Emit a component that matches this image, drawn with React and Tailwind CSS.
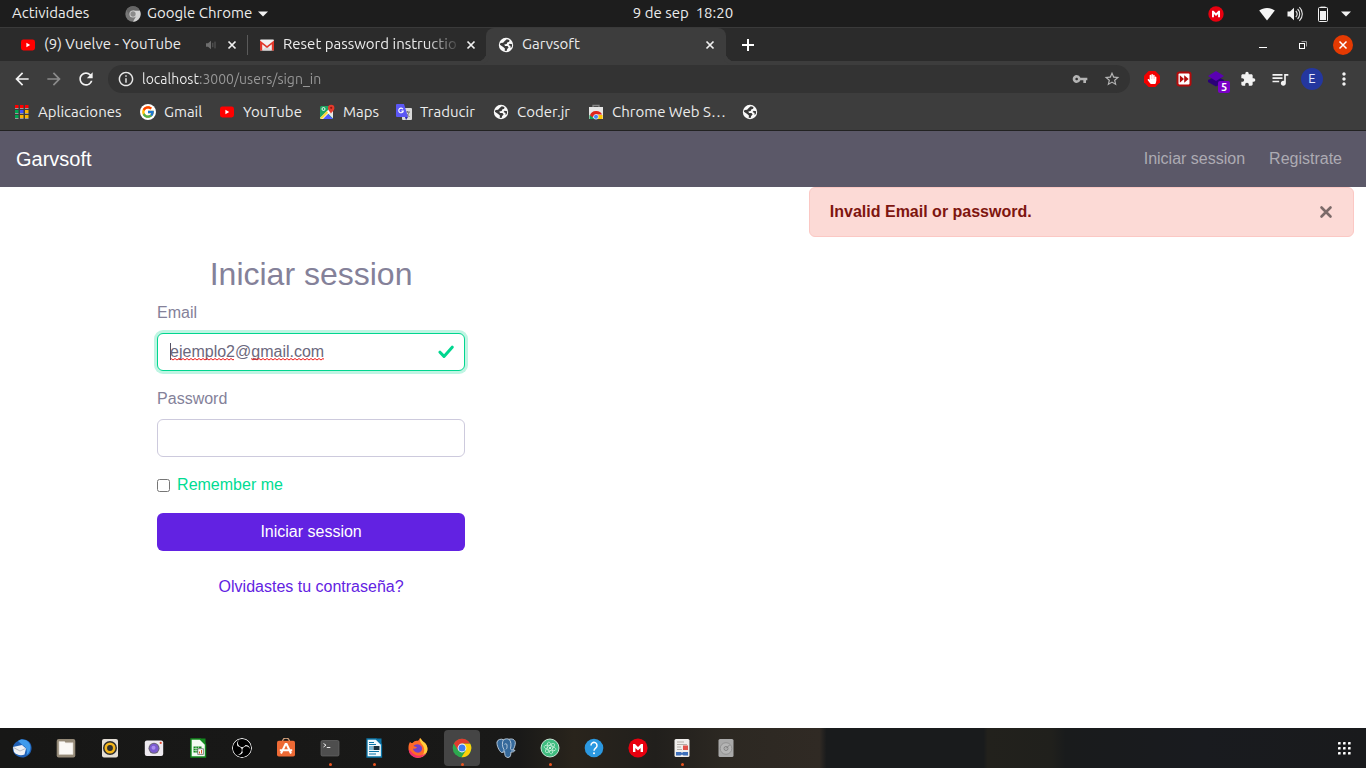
import React from "react";
import { MdVpnKey, MdStarBorder, MdExtension, MdQueueMusic, MdMoreVert, MdArrowBack, MdArrowForward, MdRefresh, MdInfoOutline } from "react-icons/md";
import { FcGoogle } from "react-icons/fc";
import { SiObsstudio } from "react-icons/si";
import { FaHandPaper } from "react-icons/fa";

/* ---------- small shared drawings ---------- */

function YouTubeIcon() {
  return (
    <svg viewBox="0 0 16 16" className="size-4 shrink-0" aria-hidden="true">
      <rect x="1" y="2.5" width="14" height="11" rx="2.4" fill="#f00" />
      <path d="M6.4 5.8v4.4L10.2 8z" fill="#fff" />
    </svg>
  );
}

function GlobeIcon() {
  return (
    <svg viewBox="0 0 16 16" className="size-4 shrink-0" aria-hidden="true">
      <circle cx="8" cy="8" r="7.2" fill="#fafafa" />
      <path d="M8.800 2.200l2.600.9-.2 1.700-2 .8-.5 1.500-2.400.5.7 1.300 2.500.1 1.100 1.600-1.400 1.500-.6 1.900-1.900-.2.2-2.200-1.700-1.600L1.900 7.700l.6-1.700 2.600-.2 1.600-1.700z" fill="#3a3a3a" />
      <path d="M14.200 7.200l-2.600-.5-1 1.300 1.900.9.100 2.200 1.200-1.200z" fill="#3a3a3a" />
    </svg>
  );
}

function CloseIcon() {
  return (
    <svg viewBox="0 0 10 10" className="size-2.5" aria-hidden="true">
      <path d="M1.500 1.500l7 7M8.500 1.500l-7 7" stroke="#f0f0f0" strokeWidth="1.700" />
    </svg>
  );
}

function CaretDown() {
  return (
    <svg viewBox="0 0 10 6" className="h-1.5 w-2.5" aria-hidden="true">
      <path d="M0 .5h10L5 5.500z" fill="#f2f2f2" />
    </svg>
  );
}

function MegaIcon({ className }) {
  return (
    <svg viewBox="0 0 20 20" className={className} aria-hidden="true">
      <circle cx="10" cy="10" r="9.600" fill="#e8000f" />
      <path d="M5 14V6h2L10 9l3-3h2v8h-2.400v-4L10 12.600 7.400 10v4z" fill="#fff" />
    </svg>
  );
}

/* ---------- desktop top bar ---------- */

function TopBar() {
  return (
    <header className="grid h-7 grid-cols-[1fr_auto_1fr] items-center border-b border-[#3a3a3a] bg-[#1d1d1d] text-[15px] text-[#ececec]">
      <div className="flex items-center">
        <button className="ml-3 w-[113px] text-left">Actividades</button>
        <button className="flex items-center gap-1.5">
          <svg viewBox="0 0 16 16" className="size-4" aria-hidden="true">
            <circle cx="8" cy="8" r="7.700" fill="#777" />
            <path d="M8 4.500h6.800A7.700 7.700 0 0 1 8 15.700l3.200-5.800z" fill="#d2d2d2" />
            <path d="M1.300 4.200A7.700 7.700 0 0 1 14.800 4.500H8L4.800 9.700z" fill="#666" />
            <circle cx="8" cy="8" r="3.600" fill="#d8d8d8" />
            <circle cx="8" cy="8" r="2.700" fill="#8b8b8b" />
          </svg>
          <span className="whitespace-nowrap">Google Chrome</span>
          <CaretDown />
        </button>
      </div>
      <button className="whitespace-pre">9 de sep  18:20</button>
      <div className="flex items-center justify-end pr-[15px]">
        <MegaIcon className="mr-[35px] size-4" />
        <button className="flex items-center gap-2.5" aria-label="Sistema">
          <span className="flex gap-3">
            <svg viewBox="0 0 16 16" className="size-4" aria-hidden="true">
              <path d="M8 14.500L.2 4.600C4.700 1 11.300 1 15.800 4.600z" fill="#f5f5f5" />
            </svg>
            <svg viewBox="0 0 16 16" className="size-4" aria-hidden="true">
              <path d="M.5 5.500H3L7 1.800v12.400L3 10.500H.5z" fill="#f2f2f2" />
              <path d="M8.800 5c1.600 1.700 1.600 4.300 0 6M10.600 3c2.800 2.800 2.800 7.200 0 10M12.400 1.200c3.900 3.900 3.900 9.700 0 13.600" fill="none" stroke="#e4e4e4" strokeWidth="1.100" />
            </svg>
            <svg viewBox="0 0 16 16" className="size-4" aria-hidden="true">
              <path d="M5.500 2V.6h5V2" fill="#f2f2f2" />
              <rect x="3.500" y="1.500" width="9" height="14" rx="1" fill="none" stroke="#f2f2f2" />
              <rect x="5" y="5" width="6" height="9" fill="#f2f2f2" />
            </svg>
          </span>
          <CaretDown />
        </button>
      </div>
    </header>
  );
}

/* ---------- browser chrome ---------- */

function TabStrip() {
  return (
    <div className="flex h-[33px] items-stretch bg-[#2b2b2b] pl-2 text-[15px] text-[#ececec]">
      <div className="flex w-[239px] items-center gap-2 pl-3 pr-2.5">
        <YouTubeIcon />
        <span className="flex-1 whitespace-nowrap">(9) Vuelve - YouTube</span>
        <svg viewBox="0 0 12 12" className="mr-0.5 size-3" aria-hidden="true">
          <path d="M1 4.200h2L6 1.800v8.400L3 7.800H1z" fill="#6e6e6e" />
          <path d="M7.800 3.800v4.400M10 2.600v6.800" stroke="#5c5c5c" strokeWidth="1" />
        </svg>
        <button aria-label="Cerrar (9) Vuelve - YouTube"><CloseIcon /></button>
      </div>
      <div className="flex w-[239px] items-center">
        <span className="h-5 w-px bg-[#5a5a5a]" />
        <div className="flex flex-1 items-center gap-2 pl-[11px] pr-2.5">
          <svg viewBox="0 0 16 16" className="size-4 shrink-0" aria-hidden="true">
            <rect x="1" y="2.500" width="14" height="11" rx="1" fill="#f1f1f1" />
            <path d="M3.200 13.500L8 8.600l4.800 4.900z" fill="#dcdcdc" />
            <path d="M1 13.500V3.400L8 9l7-5.600v10.100h-2.200V7.200L8 11 3.200 7.200v6.300z" fill="#e1382b" />
          </svg>
          <span className="flex-1 overflow-hidden whitespace-nowrap [mask-image:linear-gradient(90deg,#000_82%,transparent_102%)]">Reset password instructio</span>
          <button aria-label="Cerrar Reset password instructions"><CloseIcon /></button>
        </div>
      </div>
      <div className="relative flex w-60 items-center gap-2 rounded-t-lg bg-[#3d3d3d] pl-3 pr-[11px] before:absolute before:bottom-0 before:-left-2 before:size-2 before:rounded-br-lg before:shadow-[3px_3px_0_#3d3d3d] after:absolute after:-right-2 after:bottom-0 after:size-2 after:rounded-bl-lg after:shadow-[-3px_3px_0_#3d3d3d]">
        <GlobeIcon />
        <span className="flex-1">Garvsoft</span>
        <button aria-label="Cerrar Garvsoft"><CloseIcon /></button>
      </div>
      <button className="flex w-11 items-center justify-center" aria-label="Nueva pestaña">
        <svg viewBox="0 0 12 12" className="size-3" aria-hidden="true"><path d="M6 0v12M0 6h12" stroke="#fff" strokeWidth="2" /></svg>
      </button>
      <div className="ml-auto flex items-center pr-[3px]">
        <button className="flex h-full w-10 items-center justify-center" aria-label="Minimizar">
          <svg viewBox="0 0 10 10" className="size-2.5" aria-hidden="true"><path d="M1 7.500h8" stroke="#fff" /></svg>
        </button>
        <button className="flex h-full w-10 items-center justify-center" aria-label="Restaurar">
          <svg viewBox="0 0 10 10" className="size-2.5" aria-hidden="true">
            <path d="M3.500 1.500h5v5" fill="none" stroke="#9a9a9a" />
            <rect x="1.500" y="3.500" width="5" height="5" fill="none" stroke="#fff" />
          </svg>
        </button>
        <button className="flex h-full w-10 items-center justify-center" aria-label="Cerrar ventana">
          <svg viewBox="0 0 20 20" className="size-5" aria-hidden="true">
            <circle cx="10" cy="10" r="10" fill="#e53a02" />
            <path d="M6.500 6.500l7 7M13.500 6.500l-7 7" stroke="#fff" strokeWidth="1.500" />
          </svg>
        </button>
      </div>
    </div>
  );
}

function ToolButton({ label, children }) {
  return <button aria-label={label} className="flex size-8 items-center justify-center text-[#f2f2f2]">{children}</button>;
}

function Toolbar() {
  return (
    <div className="flex h-9 items-center gap-1.5 bg-[#3d3d3d] px-1.5">
      <div className="flex">
        <ToolButton label="Atrás"><MdArrowBack className="size-5" /></ToolButton>
        <ToolButton label="Adelante"><MdArrowForward className="size-5 text-[#8b8b8b]" /></ToolButton>
        <ToolButton label="Recargar"><MdRefresh className="size-5" /></ToolButton>
      </div>
      <div className="flex h-7 flex-1 items-center gap-2 rounded-full bg-[#333] px-2.5">
        <MdInfoOutline className="size-4 scale-110 text-[#e8e8e8]" aria-hidden="true" />
        <input
          aria-label="Dirección"
          defaultValue="localhost:3000/users/sign_in"
          className="flex-1 bg-[linear-gradient(90deg,#f2f2f2_58px,#9b9b9b_58px)] bg-clip-text text-sm text-transparent outline-none"
        />
        <div className="flex gap-4 text-[#b4b4b4]">
          <button aria-label="Contraseñas"><MdVpnKey className="size-4" /></button>
          <button aria-label="Favorito"><MdStarBorder className="size-4 scale-110" /></button>
        </div>
      </div>
      <div className="flex">
        <ToolButton label="Bloqueador">
          <span className="relative flex size-4 items-center justify-center">
            <svg viewBox="0 0 16 16" className="absolute size-4" aria-hidden="true"><path d="M4.700 0h6.600L16 4.700v6.600L11.300 16H4.700L0 11.300V4.700z" fill="#f20000" /></svg>
            <FaHandPaper className="relative size-2.5 text-white" />
          </span>
        </ToolButton>
        <ToolButton label="Velocidad">
          <svg viewBox="0 0 16 16" className="size-4" aria-hidden="true">
            <rect x=".5" y=".5" width="15" height="15" rx="3" fill="#b30b0b" />
            <rect x="2.500" y="2.500" width="11" height="11" rx="1" fill="#fff" />
            <path d="M3.800 4.200L8 8l-4.200 3.800zM8.200 4.200L12.600 8l-4.400 3.800z" fill="#b30b0b" />
          </svg>
        </ToolButton>
        <ToolButton label="Capas">
          <span className="relative block size-4">
            <svg viewBox="0 0 16 16" className="size-4" aria-hidden="true">
              <path d="M0 9l8-4 8 4v2l-8 4.500L0 11z" fill="#2b0078" />
              <path d="M8 0l8 5-8 5-8-5z" fill="#5a00b4" />
            </svg>
            <span className="absolute top-2.5 left-2.5 flex h-3 w-3 items-center justify-center rounded-xs bg-[#7a00c8] text-[11px] font-bold text-white">5</span>
          </span>
        </ToolButton>
        <ToolButton label="Extensiones"><MdExtension className="size-4" /></ToolButton>
        <ToolButton label="Medios"><MdQueueMusic className="size-5" /></ToolButton>
        <ToolButton label="Perfil">
          <span className="flex size-[22px] items-center justify-center rounded-full bg-[#24379f] text-[13px] text-[#e6e9ff]">E</span>
        </ToolButton>
        <ToolButton label="Menú"><MdMoreVert className="size-5" /></ToolButton>
      </div>
    </div>
  );
}

function AppsIcon() {
  const colors = ["#f00", "#f00", "#f00", "#00a651", "#3f51ff", "#fbb500", "#00a651", "#fbb500", "#fbb500"];
  return (
    <svg viewBox="0 0 16 16" className="size-4" aria-hidden="true">
      {colors.map((c, i) => (
        <g key={i}>
          <rect x={1 + (i % 3) * 5} y={1 + Math.floor(i / 3) * 5} width="3.500" height="3" fill={c} />
          <rect x={1 + (i % 3) * 5} y={4 + Math.floor(i / 3) * 5} width="3.500" height="1" fill="#999" />
        </g>
      ))}
    </svg>
  );
}

function MapsIcon() {
  return (
    <svg viewBox="0 0 16 16" className="size-4" aria-hidden="true">
      <rect x="1" y="2" width="13" height="13" rx="1.500" fill="#1fa463" />
      <path d="M14 4v10.500L8 8.500z" fill="#e8e8e8" />
      <path d="M2 15l6-6 6 6z" fill="#4f5bff" />
      <path d="M1 14L12 3l2 2L4 15H2z" fill="#fff" />
      <path d="M1 14l2 1L9 9 8 7z" fill="#fdd835" />
      <circle cx="4.500" cy="5" r="1.500" fill="none" stroke="#fff" strokeWidth=".9" />
      <path d="M12 10c0-2-3-3-3-6a3 3 0 0 1 6.400 0c0 3-3.400 4-3.400 6z" fill="#e53a2b" />
      <circle cx="12.200" cy="3.800" r="1.100" fill="#8c1a12" />
    </svg>
  );
}

function TranslateIcon() {
  return (
    <svg viewBox="0 0 16 16" className="size-4" aria-hidden="true">
      <rect x="6" y="4" width="10" height="12" rx="1" fill="#d9d9d9" />
      <path d="M9 8h5M11.500 7v1.500M13 8c-.5 2.500-2 4-3.500 5M10.500 10l3 3" stroke="#7a7a7a" fill="none" />
      <path d="M1 0h7l4 13H1a1 1 0 0 1-1-1V1a1 1 0 0 1 1-1z" fill="#5b57f5" />
      <path d="M9 13h3l-2 3z" fill="#2d2aa8" />
      <path d="M7 5.200A2.300 2.300 0 1 0 7.300 7H5.300" fill="none" stroke="#fff" strokeWidth="1.100" />
    </svg>
  );
}

function StoreIcon() {
  return (
    <svg viewBox="0 0 16 16" className="size-4" aria-hidden="true">
      <path d="M5 3V1.500h6V3" fill="none" stroke="#888" strokeWidth="1.300" />
      <rect x="1" y="3" width="14" height="12" fill="#e6e6e6" />
      <path d="M2 15V12a6 5 0 0 1 6-5 6 5 0 0 1 6 3.500H8z" fill="#e0241b" />
      <path d="M1.500 11v4H7z" fill="#0f9d58" />
      <path d="M9 11h5.500v4H8z" fill="#fbc400" />
      <circle cx="8" cy="12.800" r="2.400" fill="#4285f4" stroke="#fff" strokeWidth=".6" />
    </svg>
  );
}

function Bookmarks() {
  const items = [
    { label: "Aplicaciones", icon: <AppsIcon />, width: "w-[110px]" },
    { label: "Gmail", icon: <span className="flex size-4 items-center justify-center rounded-full bg-white"><FcGoogle className="size-3.5" /></span>, width: "w-[63px]" },
    { label: "YouTube", icon: <YouTubeIcon />, width: "w-[84px]" },
    { label: "Maps", icon: <MapsIcon />, width: "w-[61px]" },
    { label: "Traducir", icon: <TranslateIcon />, width: "w-[81px]" },
    { label: "Coder.jr", icon: <GlobeIcon />, width: "w-[79px]" },
    { label: "Chrome Web S…", icon: <StoreIcon />, width: "w-[138px]" },
  ];
  return (
    <nav aria-label="Marcadores" className="flex h-[34px] items-center gap-4 border-b border-[#222] bg-[#3d3d3d] px-3.5 pb-[3px] text-[15px] text-[#ececec]">
      {items.map((b) => (
        <a key={b.label} href="#" className={"flex items-center gap-2 whitespace-nowrap " + b.width}>
          <span className="shrink-0">{b.icon}</span>
          {b.label}
        </a>
      ))}
      <a href="#" aria-label="Marcador"><GlobeIcon /></a>
    </nav>
  );
}

/* ---------- web page ---------- */

function Page() {
  return (
    <div className="flex flex-1 flex-col bg-white font-['Liberation_Sans',Arial,sans-serif] text-base text-[#848199]">
      <nav className="flex h-14 items-center justify-between bg-[#5b5868] pr-6 pl-4">
        <a href="#" className="text-xl text-white">Garvsoft</a>
        <div className="flex gap-6 text-[#adabb3]">
          <a href="#">Iniciar session</a>
          <a href="#">Registrate</a>
        </div>
      </nav>
      <div role="alert" className="mr-3 ml-auto flex w-[calc(100%*5/12-24px)] items-center justify-between rounded-md border border-[#fbc8c4] bg-[#fcdad6] px-5 py-3 text-[#7e150f]">
        <strong className="font-bold">Invalid Email or password.</strong>
        <button aria-label="Cerrar aviso">
          <svg viewBox="0 0 14 14" className="size-3.5" aria-hidden="true"><path d="M2.500 2.500l9 9M11.500 2.500l-9 9" stroke="#7b6a69" strokeWidth="2.600" strokeLinecap="round" /></svg>
        </button>
      </div>
      <main className="ml-[11.5%] w-77 pt-[18px] pb-8">
        <h1 className="mb-2 text-center text-[32px] leading-[38px]">Iniciar session</h1>
        <form onSubmit={(e) => e.preventDefault()}>
          <label htmlFor="email" className="mb-2 block">Email</label>
          <div className="relative mb-4">
            <input
              id="email"
              type="text"
              spellCheck={false}
              defaultValue="ejemplo2@gmail.com"
              className="block h-[38px] w-full rounded-md border border-[#00d68f] bg-white px-3 text-[#6b687d] shadow-[0_0_0_3px_#bff5e3] outline-none"
            />
            <svg className="pointer-events-none absolute top-2.5 left-3 h-5 w-40" viewBox="0 0 160 20" aria-hidden="true">
              <defs>
                <pattern id="wave" width="4" height="3" patternUnits="userSpaceOnUse" y="15">
                  <path d="M0 2L2 .5l2 1.500" fill="none" stroke="#f01818" strokeWidth="1" />
                </pattern>
              </defs>
              <rect x="1" y="15" width="64" height="3" fill="url(#wave)" />
              <rect x="82" y="15" width="73" height="3" fill="url(#wave)" />
              <path d="M1.500 0v17" stroke="#555266" />
            </svg>
            <svg className="pointer-events-none absolute top-[11px] right-[11px] size-4" viewBox="0 0 16 16" aria-hidden="true">
              <path d="M2 8.200l4 4.200L14.200 3.200" fill="none" stroke="#00d68f" strokeWidth="3" strokeLinecap="round" strokeLinejoin="round" />
            </svg>
          </div>
          <label htmlFor="password" className="mb-2 block">Password</label>
          <input id="password" type="password" className="mb-4 block h-[38px] w-full rounded-md border border-[#cdcadd] bg-white px-3 outline-none" />
          <div className="mb-4 flex h-6 items-center gap-[7px]">
            <input id="remember" type="checkbox" className="size-[13px]" />
            <label htmlFor="remember" className="text-[#00dc93]">Remember me</label>
          </div>
          <button type="submit" className="mb-6 block h-[38px] w-full rounded-md bg-[#6222e2] text-white">Iniciar session</button>
        </form>
        <p className="text-center"><a href="#" className="text-[#6222e2]">Olvidastes tu contraseña?</a></p>
      </main>
    </div>
  );
}

/* ---------- dock ---------- */

const dockApps = [
  { name: "Thunderbird", art: (
    <>
      <path d="M6 3C9-.5 19.500 1 19.600 10c0 5-3.500 8.500-8 9.400C6 20 1 16 .8 11 .5 8 3 4 6 3z" fill="#1f5fb4" />
      <path d="M6 3C10-.5 18 2 18.500 9c0 4-2 7-4 8 1-5 0-8-4-10z" fill="#3f9bec" />
      <path d="M1 9L10 7l4 3.500-1.500 6C9 18 4 17 2 14z" fill="#f0f2f5" />
      <path d="M1.500 9.500L8 13l5.500-2.500" fill="none" stroke="#b6bcc6" />
    </>
  ) },
  { name: "Archivos", art: (
    <>
      <rect x=".7" y=".9" width="18.600" height="18.600" rx="2" fill="#958a78" />
      <path d="M3 3.500h5.500l1 1.200h7.500v11.800H3z" fill="#faf8f5" stroke="#d6d0c6" strokeWidth=".6" />
    </>
  ) },
  { name: "Rhythmbox", art: (
    <>
      <rect x="2" y="1" width="16" height="18.500" rx="2" fill="#e4ded5" />
      <circle cx="10" cy="10" r="7" fill="#2c2c2c" />
      <circle cx="10" cy="10" r="4.200" fill="none" stroke="#f3b51c" strokeWidth="2.600" />
      <circle cx="10" cy="10" r="2" fill="#333" />
    </>
  ) },
  { name: "Cheese", art: (
    <>
      <rect x=".8" y="2.500" width="18.400" height="15.500" rx="2" fill="#eeeaf0" />
      <circle cx="10" cy="10.300" r="5.500" fill="#6a6474" />
      <circle cx="10" cy="10.300" r="4.500" fill="#7b5bd0" />
      <circle cx="9.500" cy="9.800" r="2" fill="#a98cf0" />
      <circle cx="16.700" cy="4.900" r="1.100" fill="#e84a2f" />
    </>
  ) },
  { name: "LibreOffice Calc", art: (
    <>
      <path d="M3 1h9l5.500 5.500V19H3z" fill="#f2fbf2" stroke="#138a1e" strokeWidth="1.400" />
      <path d="M11.500 .5h6v6z" fill="#138a1e" />
      <rect x="5.500" y="8.500" width="8" height="6" fill="#138a1e" />
      <path d="M5.500 10.500h8M5.500 12.500h8M8 8.500v6M10.500 8.500v6" stroke="#e0f5e0" strokeWidth=".6" />
      <rect x="9.800" y="10.800" width="5.500" height="5.500" fill="#fff" stroke="#666" strokeWidth=".8" />
      <path d="M11.500 15.500v-2M13.500 15.500v-3.500" stroke="#d35a1e" />
    </>
  ) },
  { name: "OBS", icon: <SiObsstudio className="size-5 rounded-full bg-black text-white" /> },
  { name: "Software", art: (
    <>
      <path d="M6.500 4a3.500 4 0 0 1 7 0" fill="none" stroke="#d6a27c" strokeWidth="1.400" />
      <rect x="1" y="2.800" width="18" height="15.700" rx="1.800" fill="#ee6a35" />
      <path d="M5 15.500L9.600 6h1l4.400 9.500M3.800 12.300h12.400" fill="none" stroke="#fff" strokeWidth="2" />
    </>
  ) },
  { name: "Terminal", running: true, art: (
    <>
      <rect x="1" y="2.500" width="18" height="15.500" rx="1.500" fill="#4e4e4e" stroke="#686868" strokeWidth=".7" />
      <path d="M3.500 5.500L6 7.200 3.500 9M6.800 9.500h3.500" fill="none" stroke="#e8e8e8" strokeWidth="1" />
    </>
  ) },
  { name: "LibreOffice Writer", running: true, art: (
    <>
      <path d="M3 1h9l5.500 5.500V19H3z" fill="#f1f9fd" stroke="#0b75a8" strokeWidth="1.300" />
      <path d="M11.500 .5h6v6z" fill="#0b75a8" />
      <path d="M5 4.500h5M5 6.500h7M5 9h4M5 11h4M5 13.500h10M5 16h7" stroke="#0b75a8" strokeWidth="1.100" />
      <rect x="9.500" y="8" width="6" height="4" fill="#19303e" />
    </>
  ) },
  { name: "Firefox", art: (
    <>
      <path d="M2 4c1 1 1.500 1 2.500 1C6 3.500 7 3 8.500 2.800 10 3 10.500 3 12 0c2 2 3 4 5 5 2 2 3 5 2.200 8A9.500 9.500 0 0 1 .6 11.500C.2 8.500.8 6 2 4z" fill="#ff6a28" />
      <path d="M12 0c2 2 3 4 5 5 2 2 3 5 2.200 8-1 3-3 5-6 6 3-3 4-7 2-11-1-2-4-4-3.200-8z" fill="#ffcf3a" />
      <path d="M.6 11.500C1 17 6 20 10 19.700c4-.2 7-2 8-5-3 3-8 4-11 2-3-1.500-4-4-6.400-5.200z" fill="#f2306f" />
      <path d="M5.500 8c1.500-2 5.500-3 8 .5 1.500 2.500 0 6-3.500 6.200C7 14.500 5 12.500 5 10.500c2 .5 3.500 0 4-1.200C8 9 7 8.500 5.500 8z" fill="#7341c9" />
    </>
  ) },
  { name: "Google Chrome", running: true, active: true, art: (
    <>
      <circle cx="10" cy="10" r="9.300" fill="#2da94f" />
      <path d="M10 5.500h8.100A9.300 9.300 0 0 1 9.500 19.300L14 12.200z" fill="#fdd10a" />
      <path d="M1.900 5.400A9.300 9.300 0 0 1 18.100 5.500H10L6 12.300z" fill="#df3b2f" />
      <circle cx="10" cy="10" r="4.400" fill="#fff" />
      <circle cx="10" cy="10" r="3.500" fill="#3d7def" />
    </>
  ) },
  { name: "PostgreSQL", art: (
    <>
      <path d="M1 4c.5-2.500 4-3.500 6.500-2.300C9.500.6 11.500.6 13 1.300c3-1 6 .2 6.300 3 .2 2.700-1 5.400-2.300 7.700l2 .3c-.5 1.500-2.500 2-4 1.700-.2 2.500-.2 5.500-3 5.500s-3.500-2.500-3.300-6c-.8.7-2 1-3.200 1C3 13 .5 7 1 4z" fill="#35699b" stroke="#c4d4e2" strokeWidth=".9" />
      <path d="M7.500 1.700C6 4 6 8.500 7.800 11.200c.7 1 .2 2-1 2.300M13 1.300c2.300 2 2.300 6 1.500 9.200.2 1.500 1 1.500 2.500 1.500M8.500 6.300c1-.8 2.500-.6 2.500.8 0 1.800.3 3-1 4.200" fill="none" stroke="#c4d4e2" strokeWidth=".9" />
    </>
  ) },
  { name: "Atom", running: true, art: (
    <>
      <circle cx="10" cy="10" r="9" fill="#3fbc80" stroke="#d8f3e4" strokeWidth=".9" />
      <g fill="none" stroke="#c5efd8" strokeWidth=".8">
        <ellipse cx="10" cy="10" rx="6" ry="2.400" transform="rotate(15 10 10)" />
        <ellipse cx="10" cy="10" rx="6" ry="2.400" transform="rotate(75 10 10)" />
        <ellipse cx="10" cy="10" rx="6" ry="2.400" transform="rotate(135 10 10)" />
      </g>
      <circle cx="10" cy="10" r="1" fill="#fff" />
    </>
  ) },
  { name: "Ayuda", art: (
    <>
      <circle cx="10" cy="10" r="9.300" fill="#2b98e0" />
      <path d="M7 7.500a3 3 0 1 1 4.800 2.300C10.500 10.800 10 11.300 10 12.700" fill="none" stroke="#fff" strokeWidth="1.500" />
      <circle cx="10" cy="15.200" r="1" fill="#fff" />
    </>
  ) },
  { name: "MEGA", icon: <MegaIcon className="size-5" /> },
  { name: "Documentos", running: true, art: (
    <>
      <rect x="2.500" y="1" width="15" height="18" rx="1.500" fill="#f0eeec" />
      <path d="M5 4h7M5 6.500h10M5 9h4M5 11.500h5" stroke="#b5aea8" />
      <rect x="11" y="7.500" width="5" height="4.500" fill="#e2534b" />
      <path d="M4 14h5l1 1 1-1h5v3.500h-4.500L10 16.500 8.500 17.500H4z" fill="#3e6fb9" />
    </>
  ) },
  { name: "Disco", art: (
    <>
      <rect x="2.500" y="1" width="15" height="18" rx="1.500" fill="#a9a9a9" />
      <circle cx="10" cy="10.500" r="5.800" fill="#b5b5b5" stroke="#8a8a8a" strokeWidth=".8" />
      <circle cx="10" cy="10.500" r="2" fill="none" stroke="#777" strokeWidth=".8" />
      <path d="M10 10.500l3.500-3.500" stroke="#777" strokeWidth=".8" />
    </>
  ) },
];

function Dock() {
  return (
    <footer className="flex h-10 items-center justify-between bg-[linear-gradient(90deg,#171716_0%,#191918_38%,#29241c_42%,#211f1c_48%,#2c2822_53%,#302a24_60%,#191b1c_60.5%,#191b1c_72%,#22211c_72.3%,#20201c_77%,#191b1c_78%,#191b1f_88%,#191a1c_100%)] px-1">
      <div className="flex gap-2">
        {dockApps.map((app) => (
          <button
            key={app.name}
            aria-label={app.name}
            className={"relative flex size-9 items-center justify-center rounded-sm " + (app.active ? "bg-[#454545]" : "")}
          >
            {app.icon || <svg viewBox="0 0 20 20" className="size-5" aria-hidden="true">{app.art}</svg>}
            {app.running && <span className="absolute bottom-0 size-[3px] rounded-full bg-[#e95420]" />}
          </button>
        ))}
      </div>
      <button aria-label="Mostrar aplicaciones" className="flex size-9 items-center justify-center">
        <svg viewBox="0 0 13 13" className="size-[13px]" fill="#fff" aria-hidden="true">
          {[0, 5, 10].map((y) => [0, 5, 10].map((x) => <rect key={x + "-" + y} x={x} y={y} width="2.600" height="2.600" rx=".4" />))}
        </svg>
      </button>
    </footer>
  );
}

export default function App() {
  return (
    <div className="flex min-h-screen flex-col font-['Ubuntu','Noto_Sans',sans-serif]">
      <TopBar />
      <TabStrip />
      <Toolbar />
      <Bookmarks />
      <Page />
      <Dock />
    </div>
  );
}
